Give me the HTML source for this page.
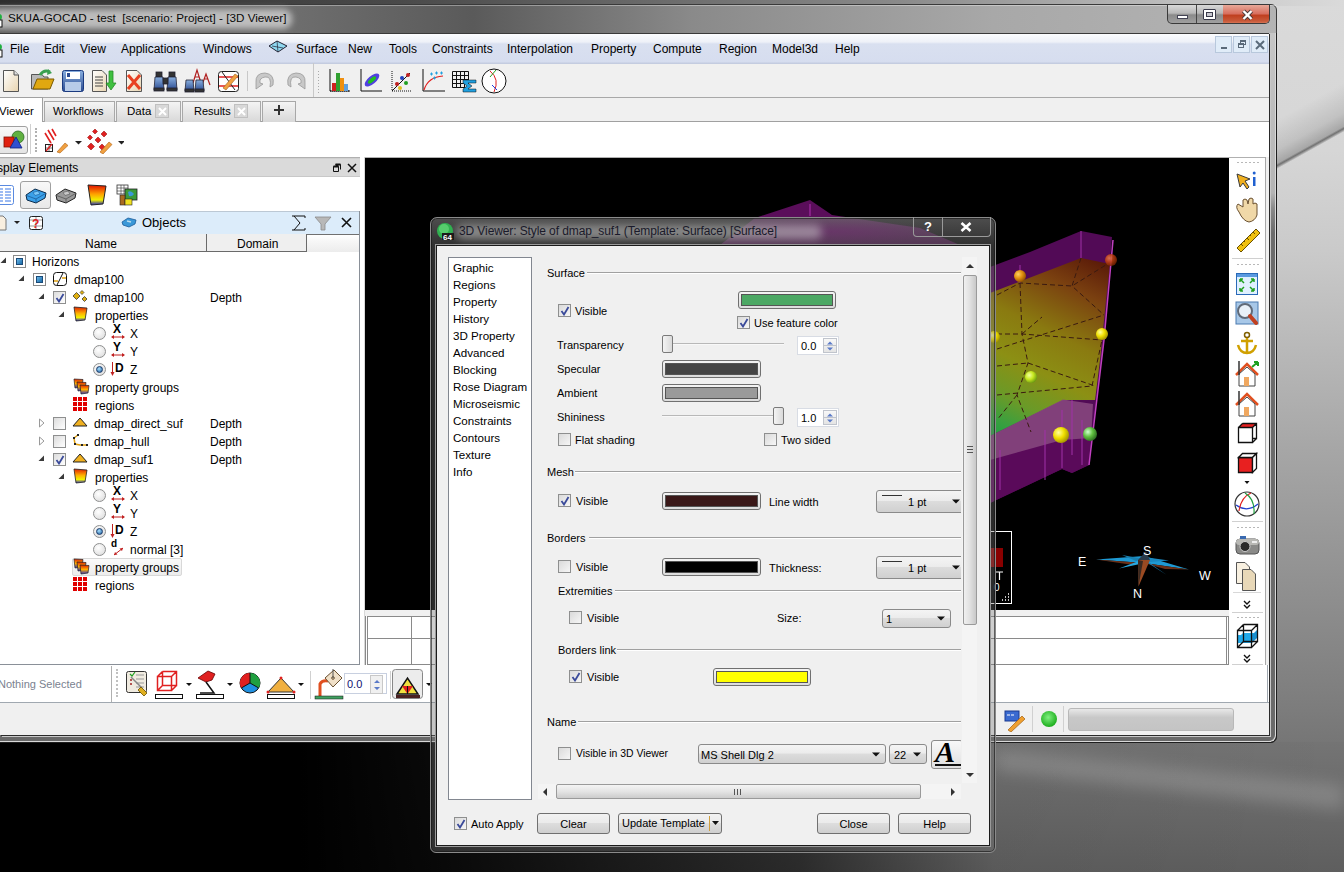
<!DOCTYPE html>
<html><head><meta charset="utf-8">
<style>
*{margin:0;padding:0;box-sizing:border-box}
html,body{width:1344px;height:872px;overflow:hidden}
body{position:relative;font-family:"Liberation Sans",sans-serif;font-size:12px;color:#000;
 background:linear-gradient(180deg,#3c3c3c 0px,#2a2a2a 5px,#000 760px,#1a1a1a 872px)}
.a{position:absolute}
.t{position:absolute;white-space:nowrap;line-height:14px}
</style></head><body>
<!-- desktop right -->
<div class="a" style="left:1270px;top:0;width:74px;height:872px;background:linear-gradient(180deg,#dadada 0,#d6d6d6 150px,#cacaca 250px,#b8b8b8 350px,#a6a6a6 450px,#8e8e8e 600px,#7c7c7c 710px,#767676 742px,#6a6a6a 800px,#626262 872px)"></div>
<svg class="a" style="left:1270px;top:0" width="74" height="300"><defs><linearGradient id="dstreak" gradientUnits="userSpaceOnUse" x1="20.5" y1="112" x2="43.9" y2="154"><stop offset="0" stop-color="#000" stop-opacity="0"/><stop offset=".55" stop-color="#000" stop-opacity=".1"/><stop offset=".8" stop-color="#000" stop-opacity=".22"/><stop offset=".84" stop-color="#222" stop-opacity=".55"/><stop offset=".9" stop-color="#000" stop-opacity="0"/></linearGradient></defs><rect width="74" height="300" fill="url(#dstreak)"/></svg>
<!-- desktop bottom -->
<div class="a" style="left:0;top:742px;width:1344px;height:130px;background:linear-gradient(180deg,#747474 0,#6c6c6c 50px,#5e5e5e 130px)"></div>
<div class="a" style="left:0;top:742px;width:1344px;height:130px;background:linear-gradient(90deg,#000 0,#000 300px,rgba(0,0,0,.92) 430px,rgba(0,0,0,.55) 800px,rgba(0,0,0,.05) 995px,rgba(0,0,0,0) 1344px)"></div>
<svg class="a" style="left:995px;top:700px" width="349" height="172"><defs><filter id="bl" x="-20%" y="-50%" width="140%" height="200%"><feGaussianBlur stdDeviation="8"/></filter></defs><path d="M0 50L349 85L349 110L0 70Z" fill="#fff" opacity=".16" filter="url(#bl)"/></svg>
<div class="a" style="left:0;top:0;width:1344px;height:6px;background:linear-gradient(90deg,#2e2e2e 0,#4a4a4a 400px,#8a8a8a 900px,#d0d0d0 1270px,#dadada 1344px)"></div>

<!-- main window frame -->
<div class="a" style="left:-8px;top:4px;width:1285px;height:739px;border-radius:6px;border:1px solid #3a3a3a;background:linear-gradient(90deg,#5a5a5a 0,#6e6e6e 300px,#5a5a5a 480px,#8a8a8a 700px,#a8a8a8 1000px,#b4b4b4 1285px)"></div>
<div class="a" style="left:-7px;top:5px;width:1283px;height:1px;background:rgba(255,255,255,.35)"></div>
<div class="a" style="left:-10px;top:9px;width:302px;height:20px;border-radius:9px;background:rgba(205,205,205,.85);filter:blur(3px)"></div>
<svg class="a" style="left:0;top:14px" width="4" height="14"><rect x="-6" y="0" width="8" height="6" rx="3" fill="#20b040"/><rect x="-6" y="6" width="8" height="7" fill="#fff" stroke="#111"/></svg>

<div class="a" style="left:-8px;top:33px;width:1285px;height:710px;border-radius:0 0 7px 0;border-right:1px solid #1e1e1e;border-bottom:1px solid #1e1e1e;box-shadow:inset -1px -1px 0 #d8d8d8;background:linear-gradient(180deg,#c6c6c6 0,#b4b4b4 160px,#8a8a8a 175px,#6c6c6c 200px,#6a6a6a 710px)"></div>
<div class="t" style="left:8px;top:11px;color:#0a0a0a;font-size:11.7px">SKUA-GOCAD - test&nbsp; [scenario: Project] - [3D Viewer]</div>
<!-- client -->
<div class="a" id="client" style="left:0;top:33px;width:1269px;height:702px;background:#f0f0f0;border-top:1px solid #3a3a3a;box-shadow:1px 1px 0 #2a2a2a,2px 2px 0 #c8c8c8"></div>


<!-- title buttons -->
<div class="a" style="left:1167px;top:5px;width:103px;height:19px;border:1px solid #3a3a3a;border-top:none;border-radius:0 0 5px 5px;overflow:hidden;background:linear-gradient(180deg,#d8d8d8,#b8b8b8 45%,#8a8a8a 55%,#a0a0a0)">
  <div class="a" style="left:28px;top:0;width:1px;height:19px;background:#444"></div>
  <div class="a" style="left:55px;top:0;width:1px;height:19px;background:#444"></div>
  <div class="a" style="left:55px;top:0;width:48px;height:19px;background:linear-gradient(180deg,#e8a898,#d87060 45%,#c04020 55%,#c85a3a 85%,#e08060)"></div>
  <div class="a" style="left:9px;top:10px;width:11px;height:4px;background:#fff;border:1px solid #445"></div>
  <div class="a" style="left:35px;top:4px;width:13px;height:11px;border:1px solid #3a3a4a;border-radius:1px;background:#fff"></div>
  <div class="a" style="left:38px;top:7px;width:7px;height:5px;border:1px solid #3a3a4a;background:#c8c8d0"></div>
  <svg class="a" style="left:73px;top:4px" width="13" height="12"><path d="M2.5 2L10.5 10M10.5 2L2.5 10" stroke="#4a3a3a" stroke-width="4.2"/><path d="M2.5 2L10.5 10M10.5 2L2.5 10" stroke="#fff" stroke-width="2.4"/></svg>
</div>
<!-- menubar -->
<div class="a" style="left:0;top:34px;width:1269px;height:30px;background:linear-gradient(180deg,#fbfcfe 0,#eef1f8 8px,#d9e0f0 10px,#d6ddef 28px,#c4cce0 29px)"></div>
<svg class="a" style="left:0;top:44px" width="4" height="14"><rect x="-6" y="0" width="8" height="6" rx="3" fill="#20b040"/><rect x="-6" y="6" width="8" height="7" fill="#fff" stroke="#111"/></svg>
<div class="t" style="left:10px;top:42px">File</div>
<div class="t" style="left:44px;top:42px">Edit</div>
<div class="t" style="left:80px;top:42px">View</div>
<div class="t" style="left:121px;top:42px">Applications</div>
<div class="t" style="left:203px;top:42px">Windows</div>
<svg class="a" style="left:268px;top:40px" width="20" height="14"><path d="M1 6L9 1L19 6L10 12Z" fill="#8fd8f0" stroke="#223" stroke-width="1"/><path d="M4 6L15 8M9 1L10 12" stroke="#223" stroke-width=".7"/></svg>
<div class="t" style="left:296px;top:42px">Surface</div>
<div class="t" style="left:348px;top:42px">New</div>
<div class="t" style="left:389px;top:42px">Tools</div>
<div class="t" style="left:432px;top:42px">Constraints</div>
<div class="t" style="left:507px;top:42px">Interpolation</div>
<div class="t" style="left:591px;top:42px">Property</div>
<div class="t" style="left:653px;top:42px">Compute</div>
<div class="t" style="left:719px;top:42px">Region</div>
<div class="t" style="left:772px;top:42px">Model3d</div>
<div class="t" style="left:835px;top:42px">Help</div>
<div class="a" style="left:1215px;top:36px;width:17px;height:17px;border:1px solid #b8c8dc;background:#e0ecf8"><div class="a" style="left:5px;top:10px;width:6px;height:2px;background:#5a6a7a"></div></div>
<div class="a" style="left:1233px;top:36px;width:17px;height:17px;border:1px solid #b8c8dc;background:#e0ecf8"><div class="a" style="left:6px;top:3px;width:6px;height:5px;border:1px solid #5a6a7a;border-top-width:2px"></div><div class="a" style="left:4px;top:6px;width:6px;height:5px;border:1px solid #5a6a7a;border-top-width:2px;background:#e0ecf8"></div></div>
<div class="a" style="left:1251px;top:36px;width:17px;height:17px;border:1px solid #b8c8dc;background:#e0ecf8"><svg class="a" style="left:3px;top:3px" width="10" height="10"><path d="M1 1L9 9M9 1L1 9" stroke="#5a6a7a" stroke-width="2"/></svg></div>
<!-- toolbar line -->
<div class="a" style="left:0;top:97px;width:1269px;height:1px;background:#a8a8a8"></div>
<!-- tabs -->
<div class="a" style="left:0;top:121px;width:1269px;height:1px;background:#a0a0a0"></div>
<div class="a" style="left:-2px;top:97px;width:45px;height:26px;background:#fff;border:1px solid #a0a0a0;border-bottom:none"></div>
<div class="t" style="left:-1px;top:104px;font-size:11.5px">Viewer</div>
<div class="a" style="left:44px;top:101px;width:71px;height:21px;border:1px solid #a8a8a8;border-bottom:none;background:linear-gradient(180deg,#f4f4f4,#e6e6e6 50%,#d8d8d8)"></div>
<div class="t" style="left:53px;top:104px;font-size:11px">Workflows</div>
<div class="a" style="left:116px;top:101px;width:65px;height:21px;border:1px solid #a8a8a8;border-bottom:none;background:linear-gradient(180deg,#f4f4f4,#e6e6e6 50%,#d8d8d8)"></div>
<div class="t" style="left:127px;top:104px;font-size:11.5px">Data</div>
<div class="a" style="left:155px;top:104px;width:14px;height:14px;border:1px solid #c0c0c0;background:#d8d8d8"><svg class="a" style="left:2px;top:2px" width="9" height="9"><path d="M1 1L8 8M8 1L1 8" stroke="#fff" stroke-width="2"/></svg></div>
<div class="a" style="left:182px;top:101px;width:79px;height:21px;border:1px solid #a8a8a8;border-bottom:none;background:linear-gradient(180deg,#f4f4f4,#e6e6e6 50%,#d8d8d8)"></div>
<div class="t" style="left:194px;top:104px;font-size:11px">Results</div>
<div class="a" style="left:234px;top:104px;width:14px;height:14px;border:1px solid #c0c0c0;background:#d8d8d8"><svg class="a" style="left:2px;top:2px" width="9" height="9"><path d="M1 1L8 8M8 1L1 8" stroke="#fff" stroke-width="2"/></svg></div>
<div class="a" style="left:262px;top:101px;width:34px;height:21px;border:1px solid #a8a8a8;border-bottom:none;background:linear-gradient(180deg,#f4f4f4,#e6e6e6 50%,#d8d8d8)"></div>
<svg class="a" style="left:273px;top:104px" width="12" height="12"><path d="M6 1V11M1 6H11" stroke="#333" stroke-width="2"/></svg>
<!-- secondary toolbar -->
<div class="a" style="left:0;top:122px;width:1269px;height:35px;background:#fff"></div>
<div class="a" style="left:0;top:157px;width:1269px;height:1px;background:#b0b0b0"></div>


<!-- main toolbar icons -->
<svg class="a" style="left:0;top:63px" width="520" height="34">
 <defs>
  <linearGradient id="paper" x1="0" y1="0" x2="1" y2="1"><stop offset="0" stop-color="#fff"/><stop offset="1" stop-color="#e8d4b0"/></linearGradient>
  <linearGradient id="blu" x1="0" y1="0" x2="0" y2="1"><stop offset="0" stop-color="#8ab0e0"/><stop offset="1" stop-color="#2a4a90"/></linearGradient>
 </defs>
 <path d="M3.5 7.5H14L18.5 12V28.5H3.5Z" fill="url(#paper)" stroke="#555"/>
 <path d="M14 7.5V12H18.5" fill="#ddd" stroke="#555"/>
 <path d="M31.5 11.5H42L44 14H48V26H31.5Z" fill="#b8b8b8" stroke="#555"/>
 <path d="M33 26L37 16H54L50 26Z" fill="#e0a810" stroke="#7a5a00"/>
 <path d="M40 12Q44 6 50 9" fill="none" stroke="#3aa050" stroke-width="3"/>
 <path d="M48 6L52 10L47 12Z" fill="#3aa050"/>
 <rect x="62.5" y="7.5" width="21" height="21" rx="2" fill="url(#blu)" stroke="#1a3a80"/>
 <rect x="66" y="9" width="14" height="7" fill="#fff"/><rect x="67" y="10" width="3" height="4" fill="#2a4a90"/>
 <rect x="65" y="19" width="16" height="9" fill="#b8cce8"/>
 <path d="M92.5 7.5H102L106.5 12V28.5H92.5Z" fill="url(#paper)" stroke="#555"/>
 <path d="M95 14H103M95 17H103M95 20H103M95 23H103" stroke="#444"/>
 <path d="M109 8H113V20H116L111 27L106 20H109Z" fill="#40c040" stroke="#2a8a2a" stroke-width=".8"/>
 <path d="M126.5 7.5H137L141.5 12V28.5H126.5Z" fill="url(#paper)" stroke="#555"/>
 <path d="M128 12L140 26M140 12L128 26" stroke="#e84020" stroke-width="3"/>
 <g fill="url(#blu)" stroke="#223" stroke-width=".8">
  <rect x="156" y="9" width="6" height="5" fill="#333"/><rect x="169" y="9" width="6" height="5" fill="#333"/>
  <path d="M155 14H163L164 27H154Z"/><path d="M168 14H176L177 27H167Z"/>
  <rect x="163" y="15" width="5" height="6" fill="#333"/>
  <rect x="154" y="25" width="10" height="3" fill="#333"/><rect x="167" y="25" width="10" height="3" fill="#333"/>
 </g>
 <path d="M193 20L197 7L201 20M195 14H199M202 22L206 11L210 22M204 16H208" fill="none" stroke="#b02020" stroke-width="1.2"/>
 <g fill="url(#blu)" stroke="#223" stroke-width=".8">
  <path d="M186 17H193L194 28H185Z"/><path d="M196 17H203L204 28H195Z"/>
  <rect x="185" y="26" width="9" height="3" fill="#333"/><rect x="195" y="26" width="9" height="3" fill="#333"/>
 </g>
 <rect x="218.5" y="8.5" width="20" height="20" rx="3" fill="#fff" stroke="#222"/>
 <path d="M219 14H238M219 23H238" stroke="#e02020" stroke-width="1.5"/>
 <path d="M222 9L235 27" stroke="#222"/>
 <path d="M223 25L235 11L238 13L226 27Z" fill="#f0a040" stroke="#a06020" stroke-width=".6"/>
 <rect x="247" y="8" width="1" height="20" fill="#c8c8c8"/>
 <path d="M256 20Q255 10 265 10Q275 11 273 22L270 24Q272 13 265 14Q259 15 260 20L263 21L256 26Z" fill="#c8c8c8" stroke="#999" stroke-width=".8"/>
 <path d="M305 20Q306 10 296 10Q286 11 288 22L291 24Q289 13 296 14Q302 15 301 20L298 21L305 26Z" fill="#c8c8c8" stroke="#999" stroke-width=".8"/>
 <rect x="313" y="0" width="1" height="34" fill="#c8c8c8"/>
 <path d="M318.5 8V30" stroke="#aaa" stroke-dasharray="1 2"/>
 <path d="M330 6V28H350" fill="none" stroke="#111"/><path d="M330 28H350" stroke="#111" stroke-dasharray="1 1"/>
 <rect x="332" y="20" width="4" height="8" fill="#d02020"/><rect x="336" y="10" width="4" height="18" fill="#30a030"/><rect x="340" y="15" width="4" height="13" fill="#f09010"/><rect x="344" y="21" width="4" height="7" fill="#60a0e0"/>
 <path d="M361 6V28H382" fill="none" stroke="#111"/>
 <ellipse cx="372" cy="17" rx="9" ry="4" transform="rotate(-40 372 17)" fill="#5040e0"/>
 <ellipse cx="372" cy="17" rx="5" ry="2" transform="rotate(-40 372 17)" fill="#20c020"/>
 <path d="M392 28L410 10" stroke="#111"/><path d="M392 8V28H412" fill="none" stroke="#111" stroke-dasharray="1 1"/>
 <circle cx="397" cy="21" r="2" fill="#c02020"/><circle cx="402" cy="15" r="2" fill="#2040c0"/><circle cx="406" cy="20" r="2" fill="#20a020"/><circle cx="400" cy="25" r="2" fill="#e0c020"/><circle cx="408" cy="12" r="2" fill="#c02020"/>
 <path d="M423 6V28H445" fill="none" stroke="#111"/>
 <path d="M424 27Q428 14 443 13" fill="none" stroke="#e02020" stroke-width="1.2"/>
 <path d="M430 11h3M431.5 9.5v3M435 10h3M436.5 8.5v3M440 10h3M441.5 8.5v3M433 15h3M434.5 13.5v3" stroke="#20a0e0"/>
 <path d="M452.5 8.5H468.5V24.5H452.5ZM452.5 12.5H468.5M452.5 16.5H468.5M452.5 20.5H468.5M456.5 8.5V24.5M460.5 8.5V24.5M464.5 8.5V24.5" fill="none" stroke="#111"/>
 <path d="M463 17H476V20H468L472 23L468 26H476V29H463V26L467 23L463 20Z" fill="#20a0e0" stroke="#111" stroke-width=".5"/>
 <ellipse cx="494" cy="18" rx="12" ry="12" fill="#fff" stroke="#111"/>
 <path d="M490 8Q500 16 494 29" fill="none" stroke="#e02020"/><path d="M496 7L490 14" stroke="#20a020"/><path d="M492 22L497 27" stroke="#2040e0"/>
</svg>


<!-- secondary toolbar icons -->
<div class="a" style="left:-3px;top:126px;width:31px;height:28px;border:1px solid #a0a0a0;border-radius:3px;background:linear-gradient(180deg,#f8f8f8,#e4e4e4)"></div>
<svg class="a" style="left:2px;top:129px" width="24" height="22"><circle cx="16" cy="8" r="6" fill="#60b040" stroke="#2a6a20" stroke-width=".8"/><rect x="2" y="8" width="10" height="10" fill="#e02010" stroke="#801000" stroke-width=".8"/><path d="M8 19L14 8L20 19Z" fill="#3050d0" stroke="#102080" stroke-width=".8"/></svg>
<div class="a" style="left:30px;top:124px;width:1px;height:30px;background:#d0d0d0"></div>
<div class="a" style="left:35px;top:128px;width:2px;height:24px;border-left:2px dotted #b0b0b0"></div>
<svg class="a" style="left:44px;top:128px" width="80" height="26"><path d="M1 5L7 15M4 2L10 12M8 1L12 8" stroke="#e02020" stroke-width="1.6"/><rect x="1.5" y="16.5" width="7" height="7" fill="#fff" stroke="#222"/><path d="M1.5 20H8.5M5 16.5V23.5" stroke="#222" stroke-width=".6"/><path d="M2 23L8 16" stroke="#e02020" stroke-width="1.4"/><path d="M13 24L21 15L24 17.5L16 25Z" fill="#f0a040" stroke="#b06010" stroke-width=".6"/><path d="M31 13L34.5 16.5L38 13Z" fill="#222"/>
<g fill="#e02020" stroke="#8a0000" stroke-width=".5"><path d="M51 1L53.5 3.5L51 6L48.5 3.5Z"/><path d="M46 7L48.5 9.5L46 12L43.5 9.5Z"/><path d="M54 9L57 12L54 15L51 12Z"/><path d="M60 3L63 6L60 9L57 6Z"/><path d="M47 15L50.5 18.5L47 22L43.5 18.5Z"/><path d="M58 16L61 19L58 22L55 19Z"/></g><path d="M56 24L65 14L68 16.5L59 26Z" fill="#f0a040" stroke="#b06010" stroke-width=".6"/><path d="M74 13L77.5 16.5L81 13Z" fill="#222"/></svg>
<g fill="#e02020"><path d="M48 6L50 4L52 6L50 8Z"/><path d="M44 12L46 10L48 12L46 14Z"/><path d="M52 10L54 8L56 10L54 12Z"/><path d="M58 6L60 4L62 6L60 8Z"/><path d="M45 18L47.5 15.5L50 18L47.5 20.5Z"/><path d="M54 16L56 14L58 16L56 18Z"/></g><path d="M54 22L61 14L63 16L57 23Z" fill="#f0a040"/><path d="M74 12L77 15L80 12Z" fill="#222"/></svg>

<!-- left dock -->
<div class="a" style="left:0;top:158px;width:360px;height:19px;background:#dadada;border-bottom:1px solid #c8c8c8;border-top:1px solid #d0d0d0"></div>
<div class="t" style="left:-3px;top:161px">splay Elements</div>
<svg class="a" style="left:330px;top:162px" width="28" height="12"><path d="M3.5 4.5H8.5V9.5H3.5ZM5.5 2.5H10.5V7.5" fill="none" stroke="#111" stroke-width="1"/><path d="M3.5 4.5H8.5M5.5 2.5H10.5" stroke="#111" stroke-width="2"/><path d="M18 2L26 10M26 2L18 10" stroke="#111" stroke-width="1.5"/></svg>
<div class="a" style="left:0;top:177px;width:360px;height:35px;background:#fff"></div>
<svg class="a" style="left:0;top:181px" width="15" height="26"><rect x="-4.5" y="4.5" width="18" height="19" rx="2" fill="#fff" stroke="#5a8ae0"/><path d="M-2 8H3M5 8H11M-2 11H3M5 11H11M-2 14H3M5 14H11M-2 17H3M5 17H11M-2 20H3M5 20H11" stroke="#3a78e8" stroke-width="1.1"/></svg>
<div class="a" style="left:20px;top:181px;width:31px;height:28px;border:1px solid #a0a0a0;border-radius:3px;background:linear-gradient(180deg,#f8f8f8,#e8e8e8)"></div>
<svg class="a" style="left:25px;top:186px" width="22" height="18"><path d="M1 9L10 3L21 7L20 12L11 17L2 14Z" fill="#3aa0e8" stroke="#0a2a4a" stroke-width="1"/><path d="M1.5 9.5L11 13L20.5 7.5M11 13V16.5" fill="none" stroke="#1a5a98" stroke-width=".8"/><path d="M8 6.5L13 5L15 8L10 9.5Z" fill="#7ac8f8" stroke="#1a5a98" stroke-width=".6"/></svg>
<svg class="a" style="left:55px;top:186px" width="22" height="18"><path d="M1 9L10 3L21 7L20 12L11 17L2 14Z" fill="#9a9a9a" stroke="#222" stroke-width="1"/><path d="M1.5 9.5L11 13L20.5 7.5M11 13V16.5" fill="none" stroke="#555" stroke-width=".8"/><path d="M8 6.5L13 5L15 8L10 9.5Z" fill="#c8c8c8" stroke="#555" stroke-width=".6"/></svg>
<svg class="a" style="left:86px;top:184px" width="22" height="22"><defs><linearGradient id="deg" x1="0" y1="0" x2="0" y2="1"><stop offset="0" stop-color="#e01000"/><stop offset=".45" stop-color="#ffa000"/><stop offset=".75" stop-color="#f0f000"/><stop offset="1" stop-color="#2020c0"/></linearGradient></defs><path d="M2 1L20 2L17 20L5 21Z" fill="url(#deg)" stroke="#222"/></svg>
<svg class="a" style="left:116px;top:184px" width="24" height="22"><rect x="1" y="1" width="11" height="9" fill="#fff" stroke="#333" stroke-width=".8"/><path d="M1 4H12M1 7H12M5 1V10M8 1V10" stroke="#333" stroke-width=".6"/><rect x="9" y="5" width="12" height="11" fill="#3a9a3a" stroke="#222" stroke-width=".8"/><path d="M12 8Q15 6 18 10Q16 13 13 12" fill="#3a98d8"/><rect x="4" y="11" width="5" height="10" fill="#a86a20" stroke="#222" stroke-width=".6"/><rect x="9" y="15" width="7" height="6" fill="#f0e020" stroke="#222" stroke-width=".6"/></svg>

<div class="a" style="left:0;top:211px;width:360px;height:24px;background:#dcecfa;border-top:1px solid #bcc8d4;border-bottom:1px solid #707070"></div>
<svg class="a" style="left:0;top:215px" width="50" height="16"><path d="M-3 1H3L6 4V15H-3Z" fill="#f8efe0" stroke="#777"/><path d="M14 6L17 9L20 6Z" fill="#222"/><rect x="29.5" y="1.5" width="13" height="13" rx="2" fill="#fff" stroke="#222"/><path d="M30 5H42M30 11H42M36 2V14" stroke="#555" stroke-width=".6"/><text x="32" y="13" font-family="Liberation Sans" font-weight="bold" font-size="12" fill="#e02020">?</text></svg>
<svg class="a" style="left:121px;top:215px" width="16" height="14"><path d="M1 7L7 3L15 5L14 9L8 12L2 10Z" fill="#3a98d8" stroke="#1a5a98" stroke-width=".8"/><path d="M6 6L10 7" stroke="#bde" stroke-width="1.5"/></svg>
<div class="t" style="left:142px;top:216px;font-size:13px">Objects</div>
<svg class="a" style="left:290px;top:215px" width="64" height="16"><path d="M2 1H15V3M2 15H15V13M4 1L10 8L4 15" fill="none" stroke="#111"/><path d="M25 2H41L35 9V15H31V9Z" fill="#b8b8b8" stroke="#8a8a8a" stroke-width=".8"/><path d="M52 3L61 12M61 3L52 12" stroke="#111" stroke-width="1.6"/></svg>
<div class="a" style="left:0;top:235px;width:359px;height:17px;background:linear-gradient(180deg,#fff 0,#f6f6f6 40%,#ececec)"></div>
<div class="a" style="left:-1px;top:234px;width:208px;height:18px;border:1px solid #6a6a6a;border-top:none;background:#efefef"></div>
<div class="a" style="left:206px;top:234px;width:101px;height:18px;border:1px solid #6a6a6a;border-top:none;background:#efefef"></div>
<div class="t" style="left:85px;top:237px">Name</div>
<div class="t" style="left:237px;top:237px">Domain</div>
<div class="a" style="left:0;top:252px;width:359px;height:413px;background:#fff"></div>
<div class="a" style="left:359px;top:211px;width:1px;height:454px;background:#8a9098"></div>
<div class="a" style="left:360px;top:157px;width:5px;height:508px;background:#fff;border-right:1px solid #d8d8d8"></div>
<svg class="a" style="left:0px;top:257px" width="7" height="7"><path d="M6 0.5V6H0.5Z" fill="#3a3a3a"/></svg>
<div class="a" style="left:13px;top:255px;width:13px;height:13px;border:1px solid #8a8a8a;background:#fff"><div class="a" style="left:2px;top:2px;width:7px;height:7px;background:linear-gradient(135deg,#6ab8e8,#1a6aa8);border:1px solid #1a4a78"></div></div>
<div class="t" style="left:32px;top:255px">Horizons</div>
<svg class="a" style="left:18px;top:275px" width="7" height="7"><path d="M6 0.5V6H0.5Z" fill="#3a3a3a"/></svg>
<div class="a" style="left:33px;top:273px;width:13px;height:13px;border:1px solid #8a8a8a;background:#fff"><div class="a" style="left:2px;top:2px;width:7px;height:7px;background:linear-gradient(135deg,#6ab8e8,#1a6aa8);border:1px solid #1a4a78"></div></div>
<svg class="a" style="left:53px;top:272px" width="15" height="15"><rect x="0.5" y="0.5" width="13" height="13" rx="3" fill="#fff" stroke="#111"/><path d="M1 9H5M9 6H13" stroke="#e0a010" stroke-width="1.5"/><path d="M4 13L10 1" stroke="#111"/></svg>
<div class="t" style="left:74px;top:273px">dmap100</div>
<svg class="a" style="left:38px;top:293px" width="7" height="7"><path d="M6 0.5V6H0.5Z" fill="#3a3a3a"/></svg>
<div class="a" style="left:53px;top:291px;width:13px;height:13px;border:1px solid #8e8f8f;background:linear-gradient(135deg,#dcdcdc,#fff)"></div>
<svg class="a" style="left:55px;top:293px" width="10" height="10"><path d="M1.5 5L4 8.5L8.5 1" fill="none" stroke="#3a4a9a" stroke-width="1.8"/></svg>
<svg class="a" style="left:72px;top:290px" width="16" height="14"><path d="M1 6L4.5 2.5L8 6L4.5 9.5Z" fill="#e0b010" stroke="#222" stroke-width=".7"/><path d="M8 2.5L10 .5L12 2.5L10 4.5Z" fill="#e0b010" stroke="#222" stroke-width=".6"/><path d="M10 9L12.5 6.5L15 9L12.5 11.5Z" fill="#e0b010" stroke="#222" stroke-width=".7"/></svg>
<div class="t" style="left:94px;top:291px">dmap100</div>
<div class="t" style="left:210px;top:291px">Depth</div>
<svg class="a" style="left:58px;top:311px" width="7" height="7"><path d="M6 0.5V6H0.5Z" fill="#3a3a3a"/></svg>
<svg class="a" style="left:73px;top:306px" width="16" height="16"><defs><linearGradient id="pg315" x1="0" y1="0" x2="0" y2="1"><stop offset="0" stop-color="#e02000"/><stop offset=".45" stop-color="#ffb000"/><stop offset=".75" stop-color="#f0f000"/><stop offset="1" stop-color="#3030c0"/></linearGradient></defs><path d="M1 1L14 2L12 14L3 15Z" fill="url(#pg315)" stroke="#222" stroke-width=".8"/></svg>
<div class="t" style="left:95px;top:309px">properties</div>
<div class="a" style="left:93px;top:327px;width:13px;height:13px;border-radius:50%;border:1px solid #8e8f8f;background:radial-gradient(circle at 40% 35%,#fff,#d8d8d8)"></div>
<svg class="a" style="left:110px;top:323px" width="16" height="18"><text x="3" y="10" font-family="Liberation Sans" font-weight="bold" font-size="12" fill="#000">X</text><path d="M2 14H14" stroke="#c02020"/><path d="M1 14L4 12V16ZM15 14L12 12V16Z" fill="#c02020"/></svg>
<div class="t" style="left:130px;top:327px">X</div>
<div class="a" style="left:93px;top:345px;width:13px;height:13px;border-radius:50%;border:1px solid #8e8f8f;background:radial-gradient(circle at 40% 35%,#fff,#d8d8d8)"></div>
<svg class="a" style="left:110px;top:341px" width="16" height="18"><text x="3" y="10" font-family="Liberation Sans" font-weight="bold" font-size="12" fill="#000">Y</text><path d="M2 14H14" stroke="#c02020"/><path d="M1 14L4 12V16ZM15 14L12 12V16Z" fill="#c02020"/></svg>
<div class="t" style="left:130px;top:345px">Y</div>
<div class="a" style="left:93px;top:363px;width:13px;height:13px;border-radius:50%;border:1px solid #8e8f8f;background:radial-gradient(circle at 40% 35%,#fff,#d8d8d8)"></div>
<div class="a" style="left:96px;top:366px;width:7px;height:7px;border-radius:50%;background:radial-gradient(circle at 40% 35%,#a8e0ff,#1a5a9a);border:1px solid #1a3a6a"></div>
<svg class="a" style="left:110px;top:360px" width="18" height="18"><path d="M2.5 2V15" stroke="#c02020"/><path d="M0.5 12L2.5 16L4.5 12Z" fill="#c02020"/><text x="5" y="12" font-family="Liberation Sans" font-weight="bold" font-size="12" fill="#000">D</text></svg>
<div class="t" style="left:130px;top:363px">Z</div>
<svg class="a" style="left:73px;top:378px" width="17" height="17"><defs><linearGradient id="gg387" x1="0" y1="0" x2="0" y2="1"><stop offset="0" stop-color="#e02000"/><stop offset=".5" stop-color="#ffb000"/><stop offset="1" stop-color="#3030c0"/></linearGradient></defs><path d="M1 1L10 1.5L9 9L2 10Z" fill="url(#gg387)" stroke="#222" stroke-width=".7"/><path d="M4 4L13 4.5L12 12L5 13Z" fill="url(#gg387)" stroke="#222" stroke-width=".7"/><path d="M7 7L16 7.5L15 15L8 16Z" fill="url(#gg387)" stroke="#222" stroke-width=".7"/></svg>
<div class="t" style="left:95px;top:381px">property groups</div>
<svg class="a" style="left:73px;top:397px" width="14" height="14"><rect x="0" y="0" width="14" height="14" fill="#e00000"/><path d="M4.5 0V14M9.5 0V14M0 4.5H14M0 9.5H14" stroke="#fff" stroke-width="1"/></svg>
<div class="t" style="left:95px;top:399px">regions</div>
<svg class="a" style="left:38px;top:418px" width="8" height="10"><path d="M1.5 1V9L6 5Z" fill="#fff" stroke="#999"/></svg>
<div class="a" style="left:53px;top:417px;width:13px;height:13px;border:1px solid #8e8f8f;background:linear-gradient(135deg,#dcdcdc,#fff)"></div>
<svg class="a" style="left:72px;top:416px" width="16" height="12"><path d="M1 10L8 2L15 10Z" fill="#f0b020" stroke="#222" stroke-width="1"/></svg>
<div class="t" style="left:94px;top:417px">dmap_direct_suf</div>
<div class="t" style="left:210px;top:417px">Depth</div>
<svg class="a" style="left:38px;top:436px" width="8" height="10"><path d="M1.5 1V9L6 5Z" fill="#fff" stroke="#999"/></svg>
<div class="a" style="left:53px;top:435px;width:13px;height:13px;border:1px solid #8e8f8f;background:linear-gradient(135deg,#dcdcdc,#fff)"></div>
<svg class="a" style="left:72px;top:433px" width="17" height="14"><path d="M6 2L2 5L3 11L8 12L15 12" fill="none" stroke="#e0a010" stroke-width="1.5"/><rect x="5" y="1" width="2" height="2" fill="#222"/><rect x="1" y="4" width="2" height="2" fill="#222"/><rect x="2" y="10" width="2" height="2" fill="#222"/><rect x="9" y="11" width="2" height="2" fill="#222"/><rect x="14" y="11" width="2" height="2" fill="#222"/></svg>
<div class="t" style="left:94px;top:435px">dmap_hull</div>
<div class="t" style="left:210px;top:435px">Depth</div>
<svg class="a" style="left:38px;top:455px" width="7" height="7"><path d="M6 0.5V6H0.5Z" fill="#3a3a3a"/></svg>
<div class="a" style="left:53px;top:453px;width:13px;height:13px;border:1px solid #8e8f8f;background:linear-gradient(135deg,#dcdcdc,#fff)"></div>
<svg class="a" style="left:55px;top:455px" width="10" height="10"><path d="M1.5 5L4 8.5L8.5 1" fill="none" stroke="#3a4a9a" stroke-width="1.8"/></svg>
<svg class="a" style="left:72px;top:452px" width="16" height="12"><path d="M1 10L8 2L15 10Z" fill="#f0b020" stroke="#222" stroke-width="1"/></svg>
<div class="t" style="left:94px;top:453px">dmap_suf1</div>
<div class="t" style="left:210px;top:453px">Depth</div>
<svg class="a" style="left:58px;top:473px" width="7" height="7"><path d="M6 0.5V6H0.5Z" fill="#3a3a3a"/></svg>
<svg class="a" style="left:73px;top:468px" width="16" height="16"><defs><linearGradient id="pg477" x1="0" y1="0" x2="0" y2="1"><stop offset="0" stop-color="#e02000"/><stop offset=".45" stop-color="#ffb000"/><stop offset=".75" stop-color="#f0f000"/><stop offset="1" stop-color="#3030c0"/></linearGradient></defs><path d="M1 1L14 2L12 14L3 15Z" fill="url(#pg477)" stroke="#222" stroke-width=".8"/></svg>
<div class="t" style="left:95px;top:471px">properties</div>
<div class="a" style="left:93px;top:489px;width:13px;height:13px;border-radius:50%;border:1px solid #8e8f8f;background:radial-gradient(circle at 40% 35%,#fff,#d8d8d8)"></div>
<svg class="a" style="left:110px;top:485px" width="16" height="18"><text x="3" y="10" font-family="Liberation Sans" font-weight="bold" font-size="12" fill="#000">X</text><path d="M2 14H14" stroke="#c02020"/><path d="M1 14L4 12V16ZM15 14L12 12V16Z" fill="#c02020"/></svg>
<div class="t" style="left:130px;top:489px">X</div>
<div class="a" style="left:93px;top:507px;width:13px;height:13px;border-radius:50%;border:1px solid #8e8f8f;background:radial-gradient(circle at 40% 35%,#fff,#d8d8d8)"></div>
<svg class="a" style="left:110px;top:503px" width="16" height="18"><text x="3" y="10" font-family="Liberation Sans" font-weight="bold" font-size="12" fill="#000">Y</text><path d="M2 14H14" stroke="#c02020"/><path d="M1 14L4 12V16ZM15 14L12 12V16Z" fill="#c02020"/></svg>
<div class="t" style="left:130px;top:507px">Y</div>
<div class="a" style="left:93px;top:525px;width:13px;height:13px;border-radius:50%;border:1px solid #8e8f8f;background:radial-gradient(circle at 40% 35%,#fff,#d8d8d8)"></div>
<div class="a" style="left:96px;top:528px;width:7px;height:7px;border-radius:50%;background:radial-gradient(circle at 40% 35%,#a8e0ff,#1a5a9a);border:1px solid #1a3a6a"></div>
<svg class="a" style="left:110px;top:522px" width="18" height="18"><path d="M2.5 2V15" stroke="#c02020"/><path d="M0.5 12L2.5 16L4.5 12Z" fill="#c02020"/><text x="5" y="12" font-family="Liberation Sans" font-weight="bold" font-size="12" fill="#000">D</text></svg>
<div class="t" style="left:130px;top:525px">Z</div>
<div class="a" style="left:93px;top:543px;width:13px;height:13px;border-radius:50%;border:1px solid #8e8f8f;background:radial-gradient(circle at 40% 35%,#fff,#d8d8d8)"></div>
<svg class="a" style="left:110px;top:538px" width="20" height="20"><text x="1" y="9" font-family="Liberation Sans" font-weight="bold" font-size="10" fill="#000">d</text><path d="M4 17L13 10" stroke="#c02020"/><path d="M13 10L9.5 10.5L12 13ZM4 17L7.5 16.5L5 14Z" fill="#c02020"/></svg>
<div class="t" style="left:130px;top:543px">normal [3]</div>
<svg class="a" style="left:73px;top:558px" width="17" height="17"><defs><linearGradient id="gg567" x1="0" y1="0" x2="0" y2="1"><stop offset="0" stop-color="#e02000"/><stop offset=".5" stop-color="#ffb000"/><stop offset="1" stop-color="#3030c0"/></linearGradient></defs><path d="M1 1L10 1.5L9 9L2 10Z" fill="url(#gg567)" stroke="#222" stroke-width=".7"/><path d="M4 4L13 4.5L12 12L5 13Z" fill="url(#gg567)" stroke="#222" stroke-width=".7"/><path d="M7 7L16 7.5L15 15L8 16Z" fill="url(#gg567)" stroke="#222" stroke-width=".7"/></svg>
<div class="a" style="left:72px;top:558px;width:110px;height:18px;border:1px solid #d8d8d8;border-radius:2px;background:linear-gradient(180deg,#fafafa,#ececec)"></div>
<svg class="a" style="left:73px;top:558px" width="17" height="17"><defs><linearGradient id="gg567" x1="0" y1="0" x2="0" y2="1"><stop offset="0" stop-color="#e02000"/><stop offset=".5" stop-color="#ffb000"/><stop offset="1" stop-color="#3030c0"/></linearGradient></defs><path d="M1 1L10 1.5L9 9L2 10Z" fill="url(#gg567)" stroke="#222" stroke-width=".7"/><path d="M4 4L13 4.5L12 12L5 13Z" fill="url(#gg567)" stroke="#222" stroke-width=".7"/><path d="M7 7L16 7.5L15 15L8 16Z" fill="url(#gg567)" stroke="#222" stroke-width=".7"/></svg>
<div class="t" style="left:95px;top:561px">property groups</div>
<svg class="a" style="left:73px;top:577px" width="14" height="14"><rect x="0" y="0" width="14" height="14" fill="#e00000"/><path d="M4.5 0V14M9.5 0V14M0 4.5H14M0 9.5H14" stroke="#fff" stroke-width="1"/></svg>
<div class="t" style="left:95px;top:579px">regions</div>
<div class="a" style="left:0;top:664px;width:360px;height:1px;background:#8a9098"></div>


<!-- 3D viewer -->
<div class="a" style="left:365px;top:158px;width:864px;height:452px;background:#000;overflow:hidden">
<svg class="a" style="left:0;top:0" width="864" height="453">
 <defs>
  <linearGradient id="surfg" gradientUnits="userSpaceOnUse" x1="1090" y1="255" x2="1000" y2="440"><stop offset="0" stop-color="#5a1a08"/><stop offset="0.18" stop-color="#7a4010"/><stop offset="0.42" stop-color="#8a7a10"/><stop offset="0.62" stop-color="#8c9014"/><stop offset="0.8" stop-color="#6a9a28"/><stop offset="0.92" stop-color="#38a040"/><stop offset="1" stop-color="#20a040"/></linearGradient>
  <radialGradient id="sy" cx=".35" cy=".35" r=".7"><stop offset="0" stop-color="#ffffa0"/><stop offset=".5" stop-color="#f0e000"/><stop offset="1" stop-color="#a09000"/></radialGradient>
  <radialGradient id="syg" cx=".35" cy=".35" r=".7"><stop offset="0" stop-color="#f0ffa0"/><stop offset=".5" stop-color="#c8e820"/><stop offset="1" stop-color="#6a9a10"/></radialGradient>
  <radialGradient id="sgr" cx=".35" cy=".35" r=".7"><stop offset="0" stop-color="#d0ffd0"/><stop offset=".5" stop-color="#60c040"/><stop offset="1" stop-color="#2a6a20"/></radialGradient>
  <radialGradient id="sor" cx=".35" cy=".35" r=".7"><stop offset="0" stop-color="#ffd060"/><stop offset=".5" stop-color="#e09010"/><stop offset="1" stop-color="#905000"/></radialGradient>
  <radialGradient id="sre" cx=".35" cy=".35" r=".7"><stop offset="0" stop-color="#f08050"/><stop offset=".5" stop-color="#c04010"/><stop offset="1" stop-color="#702000"/></radialGradient>
 </defs>
 <g transform="translate(-365,-158)">
 <path d="M755 218L810 200L832 215L920 228L960 245L720 245Z" fill="#5a0e5a"/><path d="M810 204V216" stroke="#b030b0"/>
 <!-- visible surface right of dialog -->
 <path d="M990 267L1030 252L1081 231L1112 237L1104 340L1089 465L1072 473L1062 469L990 503Z" fill="#520a56"/>
 <path d="M990 293L1081 258L1110 264L1106 300L1100 360L1095 400L1063 400L990 436Z" fill="url(#surfg)"/>
 <path d="M990 436L1063 399.5L1093 404L1091 440L1062 447L990 470Z" fill="#8a4a80" opacity=".85"/>
 <path d="M990 460L1062 440L1091 438L1089 465L1072 473L1062 469L990 503Z" fill="#5a0a5a"/>
 <path d="M1113 240L1104 340L1089 465" fill="none" stroke="#c040c0" stroke-width="1.5"/>
 <path d="M1081 231V258M1020 265V283M1072 455V400M1062 468V410M1082 465V420M1000 490V450M1045 480V430" stroke="#a030a8" stroke-width="1"/>
 <g fill="none" stroke="#3a1a10" stroke-width="1" stroke-dasharray="5 3">
  <path d="M997 295L1020 283L1072 286L1109 263M1081 258L1072 286L1104 315M1020 283L1022 334L1028 363L1017 395L1031 432M997 334L1022 334L1102 340M1022 334L1042 317M997 349L1104 315M1028 363L1095 386M997 366L1028 363M997 395L1092 386M1017 395L997 420M1092 386L1102 340"/>
 </g>
 <circle cx="994" cy="337" r="6" fill="url(#sy)"/>
 <circle cx="1031" cy="377" r="6" fill="url(#syg)"/>
 <circle cx="1061" cy="435" r="8" fill="url(#sy)"/>
 <circle cx="1090" cy="434" r="7" fill="url(#sgr)"/>
 <circle cx="1020" cy="276" r="6" fill="url(#sor)"/>
 <circle cx="1111" cy="260" r="6" fill="url(#sre)" opacity=".85"/>
 <circle cx="1102" cy="334" r="6" fill="url(#sy)"/>
 </g>
 <!-- scale widget -->
 <g transform="translate(-365,-158)">
 <rect x="980.5" y="531.5" width="31" height="72" fill="none" stroke="#fff"/>
 <rect x="990" y="548" width="13" height="19" fill="#8a0000"/>
 <path d="M996 572H1003M999.5 572V580" stroke="#fff" stroke-width="1.2"/>
 <text x="994" y="591" font-family="Liberation Sans" font-size="10" fill="#fff">0</text>
 <path d="M1008 600h1M1005 600h1M1002 600h1M1008 597h1M1005 597h1M1008 594h1" stroke="#fff" stroke-width="1.5"/>
 <!-- compass -->
 <path d="M1096 559.5L1144 556L1144 563Z" fill="#1e9ad4"/>
 <path d="M1096 559.5L1144 563L1130 564.5Z" fill="#6a3018"/>
 <path d="M1189 569.5L1144 556L1144 563Z" fill="#1e9ad4"/>
 <path d="M1189 569.5L1144 563L1165 569Z" fill="#6a3018"/>
 <path d="M1122 555L1144 559L1136 561Z" fill="#1a80b0"/>
 <path d="M1119 568.5L1144 559L1140 564Z" fill="#28a8e0"/>
 <path d="M1169 560.5L1144 557L1150 562Z" fill="#1a88c0"/>
 <path d="M1166 574.5L1144 559L1148 563Z" fill="#1a80b8"/>
 <path d="M1146 551.5L1138 560L1150 560Z" fill="#2a3a4a"/>
 <path d="M1138 560L1150 560L1138.5 586.5Z" fill="#9a4a22"/>
 <path d="M1138 560L1143 561L1138.5 586.5Z" fill="#3a2a22"/>
 <text x="1078" y="566" font-family="Liberation Sans" font-size="12.5" fill="#fff">E</text>
 <text x="1143" y="555" font-family="Liberation Sans" font-size="12.5" fill="#fff">S</text>
 <text x="1199" y="580" font-family="Liberation Sans" font-size="12.5" fill="#fff">W</text>
 <text x="1133" y="598" font-family="Liberation Sans" font-size="12.5" fill="#fff">N</text>
 </g>
</svg>
</div>
<!-- right toolbar -->
<div class="a" style="left:1229px;top:158px;width:36px;height:507px;background:#fff"></div>
<div class="a" style="left:1265px;top:157px;width:1px;height:546px;background:#a8a8a8"></div>
<div class="a" style="left:1266px;top:157px;width:3px;height:546px;background:#f0f0f0"></div>
<svg class="a" style="left:1229px;top:157px" width="36" height="510">
 <g stroke="#b8b8b8" stroke-dasharray="2 2"><path d="M8 5.5H30M8 107.5H30M8 370.5H30M8 460.5H30"/></g>
 <path d="M3 101.5H34M3 364.5H34M3 455.5H34M3 507.5H34" stroke="#d0d0d0"/>
 <!-- cursor i -->
 <path d="M8 17L21 22L16 24L20 30L18 32L14 26L11 30Z" fill="#f0b020" stroke="#3a3a3a" stroke-width="1"/>
 <rect x="24" y="20" width="2.5" height="9" fill="#2060d0"/><circle cx="25.2" cy="16" r="1.5" fill="#2060d0"/>
 <!-- hand -->
 <path d="M10 55Q6 50 9 47L14 50L14 43Q16 41 18 43L19 47L20 42Q22 40 24 42L24 47Q26 45 28 47L28 58Q26 64 20 65Q14 64 10 55Z" fill="#f0d8a8" stroke="#6a5030" stroke-width="1"/>
 <!-- ruler -->
 <path d="M8 91L27 72L31 76L12 95Z" fill="#f0c010" stroke="#6a5000" stroke-width="1"/>
 <path d="M12 87l2 2M15 84l1 1M18 81l2 2M21 78l1 1M24 75l2 2" stroke="#6a5000"/>
 <!-- fit -->
 <rect x="7.5" y="116.5" width="21" height="21" fill="#e0f0ff" stroke="#2a6ab8"/><rect x="8" y="117" width="20" height="3" fill="#5a9ae0"/>
 <path d="M11 122l4 4M11 122h3M11 122v3M25 122l-4 4M25 122h-3M25 122v3M11 134l4-4M11 134h3M11 134v-3M25 134l-4-4M25 134h-3M25 134v-3" stroke="#20a020" stroke-width="1.5"/>
 <!-- zoom -->
 <rect x="7" y="145" width="22" height="22" fill="#a8c8e8" stroke="#4a7ab0"/>
 <circle cx="16" cy="154" r="7" fill="#e8f0f8" stroke="#606a78" stroke-width="2"/>
 <path d="M21 159L27 166" stroke="#c04020" stroke-width="4" stroke-linecap="round"/>
 <!-- anchor -->
 <circle cx="18" cy="178" r="2.5" fill="none" stroke="#806000" stroke-width="1.5"/>
 <path d="M18 181V196M12 184H24M9 188Q11 196 18 196Q25 196 27 188" fill="none" stroke="#d0a000" stroke-width="2.5"/>
 <!-- home + -->
 <path d="M7 218L18 207L29 218" fill="none" stroke="#e05020" stroke-width="2.5"/>
 <path d="M10 217V229H26V217L18 210Z" fill="#fff" stroke="#444"/>
 <rect x="15" y="220" width="5" height="9" fill="#f0a860"/>
 <path d="M23 210L29 205M29 205h-4M29 205v4" stroke="#20a020" stroke-width="2"/>
 <path d="M10 218V204" stroke="#333" stroke-width="1.5"/>
 <!-- home -->
 <path d="M7 248L18 237L29 248" fill="none" stroke="#e05020" stroke-width="2.5"/>
 <path d="M10 247V259H26V247L18 240Z" fill="#fff" stroke="#444"/>
 <rect x="15" y="250" width="5" height="9" fill="#f0a860"/>
 <path d="M10 248V234" stroke="#333" stroke-width="1.5"/>
 <!-- wire cube -->
 <path d="M13.5 266.5H27.5L23.5 270.5H9.5Z" fill="#e82020"/>
 <path d="M9.5 270.5H23.5V285.5H9.5ZM13.5 266.5H27.5V281.5H23.5M9.5 270.5L13.5 266.5M23.5 270.5L27.5 266.5M23.5 285.5L27.5 281.5" fill="none" stroke="#111" stroke-width="1.3"/>
 <!-- red cube -->
 <path d="M9.5 300.5H23.5V315.5H9.5Z" fill="#e82020" stroke="#111" stroke-width="1.3"/>
 <path d="M9.5 300.5L13.5 296.5H27.5L23.5 300.5Z" fill="#fff" stroke="#111" stroke-width="1.3"/>
 <path d="M23.5 300.5L27.5 296.5V311.5L23.5 315.5Z" fill="#fff" stroke="#111" stroke-width="1.3"/>
 <path d="M15.5 324L20.5 324L18 327Z" fill="#111"/>
 <!-- sphere -->
 <circle cx="18" cy="347" r="12" fill="#fff" stroke="#333" stroke-width="1.2"/>
 <path d="M7 348Q18 356 29 347" fill="none" stroke="#2040d0" stroke-width="1.2"/><path d="M10 354Q12 340 22 336" fill="none" stroke="#e02020" stroke-width="1.2"/><path d="M16 336Q26 342 25 357" fill="none" stroke="#20a040" stroke-width="1.2"/>
 <!-- camera -->
 <rect x="7" y="382" width="23" height="15" rx="4" fill="#8a8a88" stroke="#555"/>
 <rect x="7" y="382" width="23" height="6" rx="3" fill="#b8b8b4"/>
 <rect x="11" y="379" width="6" height="3" fill="#3a6ab0"/>
 <circle cx="16" cy="389.5" r="5" fill="#2a2a2a" stroke="#ccc" stroke-width="1"/>
 <rect x="23" y="384" width="5" height="2" fill="#eee"/>
 <!-- copy -->
 <path d="M7.5 405.5H16L20.5 410V426.5H7.5Z" fill="#f8f0e0" stroke="#555"/>
 <path d="M13.5 412.5H22L26.5 417V433.5H13.5Z" fill="#e8d8b8" stroke="#555"/>
 <path d="M4 435.5H32" stroke="#d8d8d8"/>
 <path d="M15 444l3 3l3-3M15 448l3 3l3-3" fill="none" stroke="#111" stroke-width="1.4"/>
 <!-- blue cube -->
 <path d="M9 481L14 476H28L23 481Z" fill="#20a8e8"/>
 <path d="M9 478H23V486H9Z" fill="#20a8e8"/>
 <path d="M23 478L28 473V481L23 486Z" fill="#1a90d0"/>
 <path d="M8.5 473.5H22.5V490.5H8.5ZM14.5 467.5H28.5V484.5H22.5M8.5 473.5L14.5 467.5M22.5 473.5L28.5 467.5M22.5 490.5L28.5 484.5M14.5 467.5V484.5H22.5M8.5 490.5L14.5 484.5" fill="none" stroke="#111" stroke-width="1.3"/>
 <path d="M15 498l3 3l3-3M15 502l3 3l3-3" fill="none" stroke="#111" stroke-width="1.4"/>
</svg>
<!-- table under viewer -->
<div class="a" style="left:365px;top:610px;width:864px;height:6px;background:#f0f0f0"></div>
<div class="a" style="left:365px;top:616px;width:864px;height:49px;background:#fff;border:1px solid #8a8a8a;border-left:3px double #8a8a8a;border-right:3px double #8a8a8a"></div>
<div class="a" style="left:367px;top:638px;width:860px;height:1px;background:#8a8a8a"></div>
<div class="a" style="left:411px;top:616px;width:1px;height:49px;background:#8a8a8a"></div>
<!-- bottom toolbar -->
<div class="a" style="left:0;top:665px;width:1269px;height:38px;background:#fff"></div>
<div class="a" style="left:0;top:702px;width:1269px;height:1px;background:#a0a8b0"></div>
<div class="a" style="left:1267px;top:665px;width:1px;height:38px;background:#a0a8b0"></div>
<div class="a" style="left:365px;top:665px;width:1px;height:0px;background:#8a9098"></div>
<div class="t" style="left:-2px;top:677px;color:#7a8290;font-size:11px">Nothing Selected</div>
<div class="a" style="left:111px;top:666px;width:1px;height:36px;background:#b0b0b0"></div>
<div class="a" style="left:116px;top:669px;width:2px;height:28px;border-left:2px dotted #c0c0c0"></div>
<svg class="a" style="left:120px;top:666px" width="320" height="36">
 <rect x="6.5" y="5.5" width="20" height="21" rx="2" fill="#f0ebe0" stroke="#333"/>
 <path d="M10 8l2 2l3-4" stroke="#20a020" fill="none" stroke-width="1.2"/><path d="M16 9H24M16 13H24M16 17H24M16 21H24" stroke="#999"/><circle cx="11" cy="14" r="1" fill="#a02020"/><circle cx="11" cy="18" r="1" fill="#a02020"/>
 <path d="M11 11L22 22" stroke="#888" stroke-width="1.5"/><path d="M21 21L27 27L24 30L18 24Z" fill="#e0b020" stroke="#6a5000" stroke-width=".8"/>
 <path d="M37.5 10.5H51.5V24.5H37.5ZM42.5 5.5H56.5V19.5H51.5M37.5 10.5L42.5 5.5M51.5 10.5L56.5 5.5M51.5 24.5L56.5 19.5M42.5 5.5V19.5H51.5M37.5 24.5L42.5 19.5" fill="none" stroke="#e02020" stroke-width="1.5"/>
 <rect x="35.5" y="28.5" width="27" height="4" fill="#fff" stroke="#111"/>
 <path d="M66 17L72 17L69 20Z" fill="#111"/>
 <path d="M78 12L88 5L95 8L92 14L86 16Z" fill="#e02020" stroke="#600" stroke-width=".8"/><path d="M86 16L94 27H80" fill="none" stroke="#111" stroke-width="1.5"/>
 <rect x="76.5" y="28.5" width="27" height="4" fill="#fff" stroke="#111"/>
 <path d="M107 17L113 17L110 20Z" fill="#111"/>
 <circle cx="130" cy="17" r="10" fill="#2090e0" stroke="#111"/><path d="M130 17V7A10 10 0 0 1 138.7 22Z" fill="#20a040"/><path d="M130 17V7A10 10 0 0 0 121.3 22Z" fill="#e02020"/><path d="M130 17V7M130 17L138.7 22M130 17L121.3 22" stroke="#111"/>
 <path d="M148 26L161 12L174 26Z" fill="#f0b040" stroke="#333"/><circle cx="161" cy="12" r="1.5" fill="#e02020"/><circle cx="148" cy="26" r="1.5" fill="#e02020"/><circle cx="174" cy="26" r="1.5" fill="#e02020"/>
 <rect x="147.5" y="28.5" width="27" height="4" fill="#fff" stroke="#111"/>
 <path d="M178 17L184 17L181 20Z" fill="#111"/>
 <rect x="190" y="5" width="1" height="28" fill="#d0d0d0"/>
 <path d="M200 30V18Q202 14 208 15" fill="none" stroke="#e05020" stroke-width="3"/>
 <path d="M205 12L214 4L222 12L213 21Z" fill="#f0e0c8" stroke="#6a5030"/><circle cx="213" cy="12" r="1.3" fill="none" stroke="#6a5030"/><path d="M213 3V12" stroke="#555"/>
 <rect x="195" y="30" width="28" height="3" fill="#40a060" stroke="#111" stroke-width=".5"/>
 <rect x="224.5" y="7.5" width="42" height="20" fill="#fff" stroke="#c8d0e0"/>
 <rect x="270" y="5" width="1" height="28" fill="#d0d0d0"/>
 <rect x="272.5" y="3.5" width="30" height="29" rx="3" fill="#ececec" stroke="#888"/>
 <path d="M277 28L287.5 12L298 28Z" fill="#f0e040" stroke="#111" stroke-width="1.5"/><path d="M282 20H293L287.5 28Z" fill="#e02020"/><path d="M287.5 20V28" stroke="#111"/>
 <rect x="276" y="29" width="24" height="3" fill="#4a2020"/>
 <path d="M306 17L312 17L309 20Z" fill="#111"/>
</svg>
<div class="t" style="left:347px;top:677px;color:#101070;font-size:11px">0.0</div>
<div class="a" style="left:370px;top:675px;width:13px;height:19px;border:1px solid #c8c8c8;background:#f0f0f0"></div>
<svg class="a" style="left:372px;top:677px" width="10" height="16"><path d="M2 6L5 3L8 6Z M2 10L5 13L8 10Z" fill="#5a7ac8"/></svg>
<!-- status bar -->
<div class="a" style="left:0;top:703px;width:1269px;height:32px;background:#f0f0f0"></div>
<svg class="a" style="left:1000px;top:706px" width="30" height="26"><rect x="5" y="5" width="14" height="10" fill="#3a6ad0" stroke="#1a3a90"/><path d="M7 9h3M11 9h3" stroke="#fff"/><path d="M8 24L22 10L25 13L11 26Z" fill="#f0a030" stroke="#a06010" stroke-width=".7"/></svg>
<div class="a" style="left:1032px;top:706px;width:1px;height:26px;background:#d0d0d0"></div>
<div class="a" style="left:1041px;top:711px;width:16px;height:16px;border-radius:50%;background:radial-gradient(circle at 45% 40%,#80f080,#20b020 70%,#108010)"></div>
<div class="a" style="left:1063px;top:706px;width:1px;height:26px;background:#d0d0d0"></div>
<div class="a" style="left:1068px;top:708px;width:166px;height:23px;border:1px solid #b8b8b8;border-radius:3px;background:linear-gradient(180deg,#e8e8e8,#c8c8c8 40%,#c4c4c4)"></div>


<!-- dialog -->
<div class="a" style="left:430px;top:217px;width:566px;height:636px;border-radius:7px 7px 6px 6px;background:linear-gradient(180deg,rgba(110,110,110,.7) 0,rgba(80,80,80,.6) 28px,rgba(120,120,120,.36) 60px,rgba(120,120,120,.36) 100%);border:1px solid #8a8a8a;box-shadow:inset 0 0 0 1px rgba(20,20,20,.6)"></div>
<div class="a" style="left:760px;top:219px;width:180px;height:25px;background:radial-gradient(ellipse at 40% 50%,rgba(120,30,120,.35),rgba(120,30,120,0) 70%)"></div>
<div class="a" style="left:456px;top:225px;width:366px;height:14px;border-radius:7px;background:rgba(200,200,200,.55);filter:blur(4px)"></div>
<svg class="a" style="left:437px;top:223px" width="17" height="17"><circle cx="8" cy="8" r="8" fill="#30b050"/><circle cx="7" cy="6" r="5" fill="#70e080" opacity=".6"/><rect x="5" y="10" width="12" height="7" fill="#1a1a1a"/><text x="6" y="16.5" font-family="Liberation Sans" font-weight="bold" font-size="8" fill="#fff">64</text></svg>
<div class="t" style="left:459px;top:224px;color:#1a1a2a;font-size:12px;letter-spacing:-0.1px">3D Viewer: Style of dmap_suf1 (Template: Surface) [Surface]</div>
<div class="a" style="left:913px;top:217px;width:78px;height:20px;border:1px solid #9a9a9a;border-top:none;border-radius:0 0 4px 4px"></div>
<div class="a" style="left:942px;top:217px;width:1px;height:20px;background:#9a9a9a"></div>
<div class="t" style="left:924px;top:220px;color:#fff;font-weight:bold;font-size:13px">?</div>
<svg class="a" style="left:960px;top:222px" width="12" height="10"><path d="M1.5 1L10.5 9M10.5 1L1.5 9" stroke="#fff" stroke-width="2.6"/></svg>
<div class="a" style="left:436px;top:245px;width:554px;height:601px;background:#f0f0f0;border:1px solid #1a1a1a;outline:1px solid #9a9a9a"></div>
<div class="a" style="left:448px;top:257px;width:84px;height:543px;background:#fff;border:1px solid #828790"></div>
<div class="t" style="left:453px;top:261px;font-size:11px;font-size:11.6px">Graphic</div>
<div class="t" style="left:453px;top:278px;font-size:11px;font-size:11.6px">Regions</div>
<div class="t" style="left:453px;top:295px;font-size:11px;font-size:11.6px">Property</div>
<div class="t" style="left:453px;top:312px;font-size:11px;font-size:11.6px">History</div>
<div class="t" style="left:453px;top:329px;font-size:11px;font-size:11.6px">3D Property</div>
<div class="t" style="left:453px;top:346px;font-size:11px;font-size:11.6px">Advanced</div>
<div class="t" style="left:453px;top:363px;font-size:11px;font-size:11.6px">Blocking</div>
<div class="t" style="left:453px;top:380px;font-size:11px;font-size:11.6px">Rose Diagram</div>
<div class="t" style="left:453px;top:397px;font-size:11px;font-size:11.6px">Microseismic</div>
<div class="t" style="left:453px;top:414px;font-size:11px;font-size:11.6px">Constraints</div>
<div class="t" style="left:453px;top:431px;font-size:11px;font-size:11.6px">Contours</div>
<div class="t" style="left:453px;top:448px;font-size:11px;font-size:11.6px">Texture</div>
<div class="t" style="left:453px;top:465px;font-size:11px;font-size:11.6px">Info</div>
<div class="a" style="left:962px;top:257px;width:15px;height:526px;background:#f4f4f4"></div>
<svg class="a" style="left:965px;top:262px" width="10" height="8"><path d="M1 6L5 2L9 6Z" fill="#333"/></svg>
<svg class="a" style="left:965px;top:771px" width="10" height="8"><path d="M1 2L5 6L9 2Z" fill="#333"/></svg>
<div class="a" style="left:963px;top:275px;width:14px;height:350px;border:1px solid #9a9a9a;border-radius:2px;background:linear-gradient(90deg,#f0f0f0,#e0e0e0 50%,#c8c8c8)"></div>
<svg class="a" style="left:965px;top:445px" width="10" height="9"><path d="M2 1.5H8M2 4.5H8M2 7.5H8" stroke="#555"/></svg>
<div class="a" style="left:538px;top:784px;width:423px;height:15px;background:#f4f4f4"></div>
<svg class="a" style="left:541px;top:787px" width="8" height="10"><path d="M6 1L2 5L6 9Z" fill="#333"/></svg>
<svg class="a" style="left:949px;top:787px" width="8" height="10"><path d="M2 1L6 5L2 9Z" fill="#333"/></svg>
<div class="a" style="left:556px;top:784px;width:365px;height:15px;border:1px solid #9a9a9a;border-radius:2px;background:linear-gradient(180deg,#f4f4f4,#e4e4e4 50%,#cccccc)"></div>
<svg class="a" style="left:733px;top:787px" width="9" height="10"><path d="M1.5 2V8M4.5 2V8M7.5 2V8" stroke="#555"/></svg>
<div class="a" style="left:537px;top:257px;width:424px;height:526px;overflow:hidden"><div class="a" style="left:-537px;top:-257px;width:1344px;height:872px">
<div class="t" style="left:547px;top:266px;font-size:11px;">Surface</div><div class="a" style="left:587px;top:272px;width:374px;height:2px;border-top:1px solid #a0a0a0;border-bottom:1px solid #fff"></div>
<div class="a" style="left:558px;top:304px;width:13px;height:13px;border:1px solid #8e8f8f;background:linear-gradient(135deg,#dadada,#f6f6f6)"></div><svg class="a" style="left:560px;top:306px" width="10" height="10"><path d="M1.5 5L4 8.5L8.5 1" fill="none" stroke="#3a4a9a" stroke-width="1.8"/></svg>
<div class="t" style="left:575px;top:304px;font-size:11px;">Visible</div>
<div class="a" style="left:738px;top:291px;width:98px;height:18px;border:1px solid #707070;border-radius:3px;background:linear-gradient(180deg,#f4f4f4,#dcdcdc)"><div class="a" style="left:2px;top:2px;width:92px;height:12px;background:#4ca864;border:1px solid #555"></div></div>
<div class="a" style="left:737px;top:316px;width:13px;height:13px;border:1px solid #8e8f8f;background:linear-gradient(135deg,#dadada,#f6f6f6)"></div><svg class="a" style="left:739px;top:318px" width="10" height="10"><path d="M1.5 5L4 8.5L8.5 1" fill="none" stroke="#3a4a9a" stroke-width="1.8"/></svg>
<div class="t" style="left:754px;top:316px;font-size:11px;">Use feature color</div>
<div class="t" style="left:557px;top:338px;font-size:11px;">Transparency</div>
<div class="a" style="left:662px;top:343px;width:122px;height:2px;border-top:1px solid #b8b8b8;border-bottom:1px solid #f8f8f8;background:#e0e0e0"></div><div class="a" style="left:662px;top:335px;width:11px;height:18px;border:1px solid #7a7a7a;border-radius:2px;background:linear-gradient(90deg,#f4f4f4,#dadada)"></div>
<div class="a" style="left:797px;top:336px;width:42px;height:19px;border:1px solid #d8dce4;background:#fff"></div><div class="t" style="left:801px;top:339px;font-size:11px;">0.0</div><div class="a" style="left:823px;top:338px;width:14px;height:15px;border:1px solid #c0c4cc;background:linear-gradient(180deg,#f8f8f8,#e4e4e4)"></div><div class="a" style="left:824px;top:345px;width:12px;height:1px;background:#c0c4cc"></div><svg class="a" style="left:825px;top:339px" width="10" height="14"><path d="M2 5.5L5 2.5L8 5.5Z M2 8.5L5 11.5L8 8.5Z" fill="#5a7ac8"/></svg>
<div class="t" style="left:557px;top:362px;font-size:11px;">Specular</div>
<div class="a" style="left:662px;top:360px;width:99px;height:18px;border:1px solid #707070;border-radius:3px;background:linear-gradient(180deg,#f4f4f4,#dcdcdc)"><div class="a" style="left:2px;top:2px;width:93px;height:12px;background:#454545;border:1px solid #555"></div></div>
<div class="t" style="left:557px;top:386px;font-size:11px;">Ambient</div>
<div class="a" style="left:662px;top:384px;width:99px;height:18px;border:1px solid #707070;border-radius:3px;background:linear-gradient(180deg,#f4f4f4,#dcdcdc)"><div class="a" style="left:2px;top:2px;width:93px;height:12px;background:#9a9a9a;border:1px solid #555"></div></div>
<div class="t" style="left:557px;top:410px;font-size:11px;">Shininess</div>
<div class="a" style="left:662px;top:415px;width:122px;height:2px;border-top:1px solid #b8b8b8;border-bottom:1px solid #f8f8f8;background:#e0e0e0"></div><div class="a" style="left:773px;top:407px;width:11px;height:18px;border:1px solid #7a7a7a;border-radius:2px;background:linear-gradient(90deg,#f4f4f4,#dadada)"></div>
<div class="a" style="left:797px;top:408px;width:42px;height:19px;border:1px solid #d8dce4;background:#fff"></div><div class="t" style="left:801px;top:411px;font-size:11px;">1.0</div><div class="a" style="left:823px;top:410px;width:14px;height:15px;border:1px solid #c0c4cc;background:linear-gradient(180deg,#f8f8f8,#e4e4e4)"></div><div class="a" style="left:824px;top:417px;width:12px;height:1px;background:#c0c4cc"></div><svg class="a" style="left:825px;top:411px" width="10" height="14"><path d="M2 5.5L5 2.5L8 5.5Z M2 8.5L5 11.5L8 8.5Z" fill="#5a7ac8"/></svg>
<div class="a" style="left:558px;top:433px;width:13px;height:13px;border:1px solid #8e8f8f;background:linear-gradient(135deg,#dadada,#f6f6f6)"></div>
<div class="t" style="left:575px;top:433px;font-size:11px;">Flat shading</div>
<div class="a" style="left:764px;top:433px;width:13px;height:13px;border:1px solid #8e8f8f;background:linear-gradient(135deg,#dadada,#f6f6f6)"></div>
<div class="t" style="left:781px;top:433px;font-size:11px;">Two sided</div>
<div class="t" style="left:547px;top:465px;font-size:11px;">Mesh</div><div class="a" style="left:575px;top:471px;width:386px;height:2px;border-top:1px solid #a0a0a0;border-bottom:1px solid #fff"></div>
<div class="a" style="left:558px;top:494px;width:13px;height:13px;border:1px solid #8e8f8f;background:linear-gradient(135deg,#dadada,#f6f6f6)"></div><svg class="a" style="left:560px;top:496px" width="10" height="10"><path d="M1.5 5L4 8.5L8.5 1" fill="none" stroke="#3a4a9a" stroke-width="1.8"/></svg>
<div class="t" style="left:576px;top:494px;font-size:11px;">Visible</div>
<div class="a" style="left:662px;top:492px;width:99px;height:18px;border:1px solid #707070;border-radius:3px;background:linear-gradient(180deg,#f4f4f4,#dcdcdc)"><div class="a" style="left:2px;top:2px;width:93px;height:12px;background:#3a1818;border:1px solid #555"></div></div>
<div class="t" style="left:769px;top:495px;font-size:11px;">Line width</div>
<div class="a" style="left:876px;top:490px;width:90px;height:23px;border:1px solid #8a8a8a;border-radius:3px;background:linear-gradient(180deg,#f4f4f4 0,#ececec 45%,#dcdcdc 50%,#d0d0d0)"></div><svg class="a" style="left:951px;top:499px" width="10" height="6"><path d="M1 0.5H9L5 4.5Z" fill="#111"/></svg><div class="a" style="left:882px;top:495px;width:20px;height:1px;background:#333"></div><div class="t" style="left:908px;top:495px;font-size:11px;">1 pt</div>
<div class="t" style="left:547px;top:531px;font-size:11px;">Borders</div><div class="a" style="left:589px;top:537px;width:372px;height:2px;border-top:1px solid #a0a0a0;border-bottom:1px solid #fff"></div>
<div class="a" style="left:558px;top:560px;width:13px;height:13px;border:1px solid #8e8f8f;background:linear-gradient(135deg,#dadada,#f6f6f6)"></div>
<div class="t" style="left:576px;top:560px;font-size:11px;">Visible</div>
<div class="a" style="left:662px;top:558px;width:99px;height:18px;border:1px solid #707070;border-radius:3px;background:linear-gradient(180deg,#f4f4f4,#dcdcdc)"><div class="a" style="left:2px;top:2px;width:93px;height:12px;background:#000;border:1px solid #555"></div></div>
<div class="t" style="left:769px;top:561px;font-size:11px;">Thickness:</div>
<div class="a" style="left:876px;top:556px;width:90px;height:23px;border:1px solid #8a8a8a;border-radius:3px;background:linear-gradient(180deg,#f4f4f4 0,#ececec 45%,#dcdcdc 50%,#d0d0d0)"></div><svg class="a" style="left:951px;top:565px" width="10" height="6"><path d="M1 0.5H9L5 4.5Z" fill="#111"/></svg><div class="a" style="left:882px;top:561px;width:20px;height:1px;background:#333"></div><div class="t" style="left:908px;top:561px;font-size:11px;">1 pt</div>
<div class="t" style="left:558px;top:584px;font-size:11px;">Extremities</div><div class="a" style="left:615px;top:590px;width:346px;height:2px;border-top:1px solid #a0a0a0;border-bottom:1px solid #fff"></div>
<div class="a" style="left:569px;top:611px;width:13px;height:13px;border:1px solid #8e8f8f;background:linear-gradient(135deg,#dadada,#f6f6f6)"></div>
<div class="t" style="left:587px;top:611px;font-size:11px;">Visible</div>
<div class="t" style="left:777px;top:611px;font-size:11px;">Size:</div>
<div class="a" style="left:882px;top:609px;width:69px;height:19px;border:1px solid #8a8a8a;border-radius:3px;background:linear-gradient(180deg,#f4f4f4 0,#ececec 45%,#dcdcdc 50%,#d0d0d0)"></div><svg class="a" style="left:936px;top:616px" width="10" height="6"><path d="M1 0.5H9L5 4.5Z" fill="#111"/></svg><div class="t" style="left:886px;top:612px;font-size:11px;">1</div>
<div class="t" style="left:558px;top:643px;font-size:11px;">Borders link</div><div class="a" style="left:617px;top:649px;width:344px;height:2px;border-top:1px solid #a0a0a0;border-bottom:1px solid #fff"></div>
<div class="a" style="left:569px;top:670px;width:13px;height:13px;border:1px solid #8e8f8f;background:linear-gradient(135deg,#dadada,#f6f6f6)"></div><svg class="a" style="left:571px;top:672px" width="10" height="10"><path d="M1.5 5L4 8.5L8.5 1" fill="none" stroke="#3a4a9a" stroke-width="1.8"/></svg>
<div class="t" style="left:587px;top:670px;font-size:11px;">Visible</div>
<div class="a" style="left:713px;top:668px;width:98px;height:18px;border:1px solid #707070;border-radius:3px;background:linear-gradient(180deg,#f4f4f4,#dcdcdc)"><div class="a" style="left:2px;top:2px;width:92px;height:12px;background:#ffff00;border:1px solid #555"></div></div>
<div class="t" style="left:547px;top:715px;font-size:11px;">Name</div><div class="a" style="left:578px;top:721px;width:383px;height:2px;border-top:1px solid #a0a0a0;border-bottom:1px solid #fff"></div>
<div class="a" style="left:558px;top:747px;width:13px;height:13px;border:1px solid #8e8f8f;background:linear-gradient(135deg,#dadada,#f6f6f6)"></div>
<div class="t" style="left:576px;top:747px;font-size:11px;font-size:10.4px">Visible in 3D Viewer</div>
<div class="a" style="left:698px;top:744px;width:188px;height:20px;border:1px solid #8a8a8a;border-radius:3px;background:linear-gradient(180deg,#f4f4f4 0,#ececec 45%,#dcdcdc 50%,#d0d0d0)"></div><svg class="a" style="left:871px;top:752px" width="10" height="6"><path d="M1 0.5H9L5 4.5Z" fill="#111"/></svg><div class="t" style="left:701px;top:748px;font-size:11px;">MS Shell Dlg 2</div>
<div class="a" style="left:889px;top:744px;width:38px;height:20px;border:1px solid #8a8a8a;border-radius:3px;background:linear-gradient(180deg,#f4f4f4 0,#ececec 45%,#dcdcdc 50%,#d0d0d0)"></div><svg class="a" style="left:912px;top:752px" width="10" height="6"><path d="M1 0.5H9L5 4.5Z" fill="#111"/></svg><div class="t" style="left:894px;top:748px;font-size:11px;">22</div>
<div class="a" style="left:931px;top:740px;width:32px;height:29px;border:1px solid #8a8a8a;border-radius:3px;background:linear-gradient(180deg,#f8f8f8,#e0e0e0)"></div>
<div class="t" style="left:935px;top:737px;font-family:'Liberation Serif',serif;font-weight:bold;font-style:italic;font-size:30px;line-height:30px">A</div>
<div class="a" style="left:935px;top:764px;width:28px;height:2px;background:#111"></div>
</div></div>
<div class="a" style="left:454px;top:817px;width:13px;height:13px;border:1px solid #8e8f8f;background:linear-gradient(135deg,#dadada,#f6f6f6)"></div><svg class="a" style="left:456px;top:819px" width="10" height="10"><path d="M1.5 5L4 8.5L8.5 1" fill="none" stroke="#3a4a9a" stroke-width="1.8"/></svg>
<div class="t" style="left:471px;top:817px;font-size:11px;">Auto Apply</div>
<div class="a" style="left:537px;top:813px;width:73px;height:21px;border:1px solid #707070;border-radius:3px;background:linear-gradient(180deg,#f2f2f2 0,#ebebeb 45%,#dddddd 50%,#cfcfcf)"></div><div class="t" style="left:537px;top:817px;width:73px;text-align:center;font-size:11px">Clear</div>
<div class="a" style="left:618px;top:813px;width:104px;height:21px;border:1px solid #707070;border-radius:3px;background:linear-gradient(180deg,#f2f2f2 0,#ebebeb 45%,#dddddd 50%,#cfcfcf)"></div><div class="t" style="left:622px;top:816px;font-size:11px;">Update Template</div>
<div class="a" style="left:709px;top:816px;width:1px;height:15px;background:#d0a040"></div>
<svg class="a" style="left:711px;top:820px" width="9" height="6"><path d="M1 1H8L4.5 5Z" fill="#111"/></svg>
<div class="a" style="left:817px;top:813px;width:73px;height:21px;border:1px solid #707070;border-radius:3px;background:linear-gradient(180deg,#f2f2f2 0,#ebebeb 45%,#dddddd 50%,#cfcfcf)"></div><div class="t" style="left:817px;top:817px;width:73px;text-align:center;font-size:11px">Close</div>
<div class="a" style="left:898px;top:813px;width:73px;height:21px;border:1px solid #707070;border-radius:3px;background:linear-gradient(180deg,#f2f2f2 0,#ebebeb 45%,#dddddd 50%,#cfcfcf)"></div><div class="t" style="left:898px;top:817px;width:73px;text-align:center;font-size:11px">Help</div>
</body></html>
